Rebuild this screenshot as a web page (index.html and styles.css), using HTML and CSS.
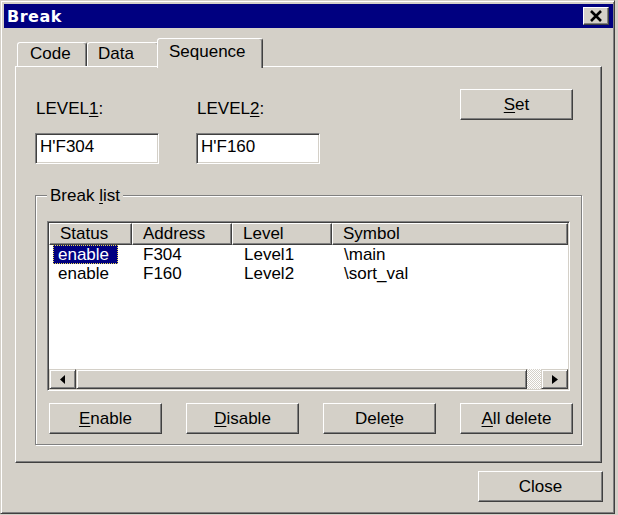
FILE: index.html
```html
<!DOCTYPE html>
<html>
<head>
<meta charset="utf-8">
<link rel="stylesheet" href="styles.css">
</head>
<body>
<div class="window">
  <div class="titlebar">
    <span class="title">Break</span>
    <div class="close-x">
      <svg width="14" height="12" viewBox="0 0 14 12"><path d="M2 1 L12 11 M12 1 L2 11" stroke="#000" stroke-width="2.6" fill="none"/></svg>
    </div>
  </div>
  <div class="body">
    <div class="tabs">
      <div class="tab tab-code">Code</div>
      <div class="tab tab-data">Data</div>
      <div class="tab tab-active">Sequence</div>
    </div>
    <div class="panel">
      <div class="top-row">
        <div class="field">
          <div class="label">LEVEL<u>1</u>:</div>
          <div class="edit">H'F304</div>
        </div>
        <div class="field field2">
          <div class="label">LEVEL<u>2</u>:</div>
          <div class="edit">H'F160</div>
        </div>
        <div class="btn btn-set"><u>S</u>et</div>
      </div>
      <fieldset class="group">
        <legend>Break <u>l</u>ist</legend>
        <div class="list">
          <div class="lv-head">
            <div class="hcell">Status</div>
            <div class="hcell">Address</div>
            <div class="hcell">Level</div>
            <div class="hcell">Symbol</div>
          </div>
          <div class="lv-body">
            <div class="lv-row">
              <div class="c0"><span class="sel">enable</span></div>
              <div class="c1">F304</div>
              <div class="c2">Level1</div>
              <div class="c3">\main</div>
            </div>
            <div class="lv-row">
              <div class="c0"><span class="plain">enable</span></div>
              <div class="c1">F160</div>
              <div class="c2">Level2</div>
              <div class="c3">\sort_val</div>
            </div>
          </div>
          <div class="hscroll">
            <div class="sb-btn"><svg width="5" height="9" viewBox="0 0 5 9"><polygon points="5,0 5,9 0,4.5" fill="#000"/></svg></div>
            <div class="sb-thumb"></div>
            <div class="sb-track"></div>
            <div class="sb-btn"><svg width="6" height="9" viewBox="0 0 6 9"><polygon points="0,0 6,4.5 0,9" fill="#000"/></svg></div>
          </div>
        </div>
        <div class="btn-row">
          <div class="btn"><u>E</u>nable</div>
          <div class="btn"><u>D</u>isable</div>
          <div class="btn">Dele<u>t</u>e</div>
          <div class="btn"><u>A</u>ll delete</div>
        </div>
      </fieldset>
    </div>
    <div class="footer">
      <div class="btn btn-close">Close</div>
    </div>
  </div>
</div>
</body>
</html>
```
FILE: styles.css
```css
html, body {
  margin: 0;
  background: #d4d0c8;
}
body {
  font-family: "Liberation Sans", Arial, sans-serif;
  font-size: 17px;
  color: #000;
}
u { text-decoration: underline; text-underline-offset: 2px; }

.window {
  width: 615px;
  height: 514px;
  box-sizing: border-box;
  border: 1px solid;
  border-color: #d4d0c8 #404040 #404040 #d4d0c8;
  box-shadow: inset 1px 1px #fff, inset -1px -1px #808080;
  padding: 3px 1px 0 3px;
}

.titlebar {
  height: 24px;
  background: #000080;
  display: flex;
  align-items: center;
  justify-content: space-between;
  padding: 0 4px 0 3px;
}
.title {
  color: #fff;
  font-family: "DejaVu Sans", Verdana, sans-serif;
  font-weight: bold;
  font-size: 16px;
  letter-spacing: 0.5px;
}
.close-x {
  width: 26px;
  height: 18px;
  box-sizing: border-box;
  background: #d4d0c8;
  border: 1px solid;
  border-color: #fff #404040 #404040 #fff;
  box-shadow: inset -1px -1px #808080;
  display: flex;
  align-items: center;
  justify-content: center;
}
.close-x svg { display: block; }

.body {
  padding: 10px 11px 0 11px;
}

.tabs {
  display: flex;
  align-items: flex-end;
  height: 28px;
  padding-left: 2px;
}
.tab {
  box-sizing: border-box;
  height: 24px;
  border: 1px solid;
  border-bottom: 0;
  border-color: #fff #404040 transparent #fff;
  box-shadow: inset -1px 0 #808080;
  border-radius: 3px 3px 0 0;
  padding-left: 11px;
  line-height: 22px;
  background: #d4d0c8;
}
.tab-code { width: 70px; padding-left: 12px; }
.tab-data { width: 72px; padding-left: 10px; }
.tab-active {
  width: 106px;
  height: 30px;
  margin: 0 -2px -2px -2px;
  line-height: 26px;
  position: relative;
  z-index: 1;
}

.panel {
  height: 397px;
  box-sizing: border-box;
  border: 1px solid;
  border-color: #fff #404040 #404040 #fff;
  box-shadow: inset -1px -1px #808080;
  padding: 22px 18px 0 19px;
}

.top-row {
  display: flex;
  align-items: flex-start;
}
.field { width: 124px; }
.field2 { margin-left: 37px; }
.label {
  margin-top: 11px;
  line-height: 17px;
  padding-left: 1px;
}
.edit {
  margin-top: 16px;
  height: 31px;
  box-sizing: border-box;
  background: #fff;
  border: 1px solid;
  border-color: #808080 #fff #fff #808080;
  box-shadow: inset 1px 1px #404040, inset -1px -1px #d4d0c8;
  padding: 4px 4px 0 4px;
  line-height: 17px;
}

.btn {
  width: 113px;
  height: 31px;
  box-sizing: border-box;
  border: 1px solid;
  border-color: #fff #404040 #404040 #fff;
  box-shadow: inset -1px -1px #808080;
  background: #d4d0c8;
  display: flex;
  align-items: center;
  justify-content: center;
  line-height: 17px;
}
.btn-set { margin-left: auto; margin-right: 10px; }

.group {
  margin: 23px 0 0 0;
  width: 547px;
  box-sizing: border-box;
  min-width: 0;
  border: 1px solid #808080;
  box-shadow: 1px 1px 0 #fff, inset 1px 1px 0 #fff;
  padding: 17px 11px 10px 11px;
}
.group legend {
  padding: 0 3px;
  line-height: 17px;
  background: #d4d0c8;
}

.list {
  width: 523px;
  height: 170px;
  box-sizing: border-box;
  border: 1px solid;
  border-color: #808080 #fff #fff #808080;
  box-shadow: inset 1px 1px #404040, inset -1px -1px #d4d0c8;
  padding: 1px;
  background: #fff;
  display: flex;
  flex-direction: column;
}
.lv-head, .lv-row {
  display: grid;
  grid-template-columns: 83px 100px 100px 1fr;
}
.hcell {
  height: 22px;
  box-sizing: border-box;
  background: #d4d0c8;
  border: 1px solid;
  border-color: #fff #404040 #404040 #fff;
  box-shadow: inset -1px -1px #808080;
  padding-left: 10px;
  line-height: 20px;
}
.lv-body {
  flex: 1;
}
.lv-row {
  height: 19px;
  line-height: 19px;
}
.c0 { display: flex; align-items: center; }
.sel {
  margin-left: 4px;
  padding: 0 8px 0 4px;
  line-height: 17px;
  background: #000080;
  color: #fff;
  border: 1px dotted #e8d850;
}
.plain { margin-left: 9px; }
.c1 { padding-left: 11px; }
.c2, .c3 { padding-left: 12px; }

.hscroll {
  height: 20px;
  display: flex;
}
.sb-btn {
  width: 27px;
  box-sizing: border-box;
  background: #d4d0c8;
  border: 1px solid;
  border-color: #d4d0c8 #404040 #404040 #d4d0c8;
  box-shadow: inset 1px 1px #fff, inset -1px -1px #808080;
  display: flex;
  align-items: center;
  justify-content: center;
}
.sb-btn svg { display: block; }
.sb-thumb {
  width: 451px;
  box-sizing: border-box;
  background: #d4d0c8;
  border: 1px solid;
  border-color: #d4d0c8 #404040 #404040 #d4d0c8;
  box-shadow: inset 1px 1px #fff, inset -1px -1px #808080;
}
.sb-track {
  flex: 1;
  background: repeating-conic-gradient(#fff 0 25%, #d4d0c8 0 50%);
  background-size: 2px 2px;
}

.btn-row {
  display: flex;
  justify-content: space-between;
  margin: 12px -3px 0 2px;
}

.footer {
  display: flex;
  justify-content: flex-end;
  margin-top: 8px;
  margin-right: -1px;
}
.btn-close { width: 125px; }
```
